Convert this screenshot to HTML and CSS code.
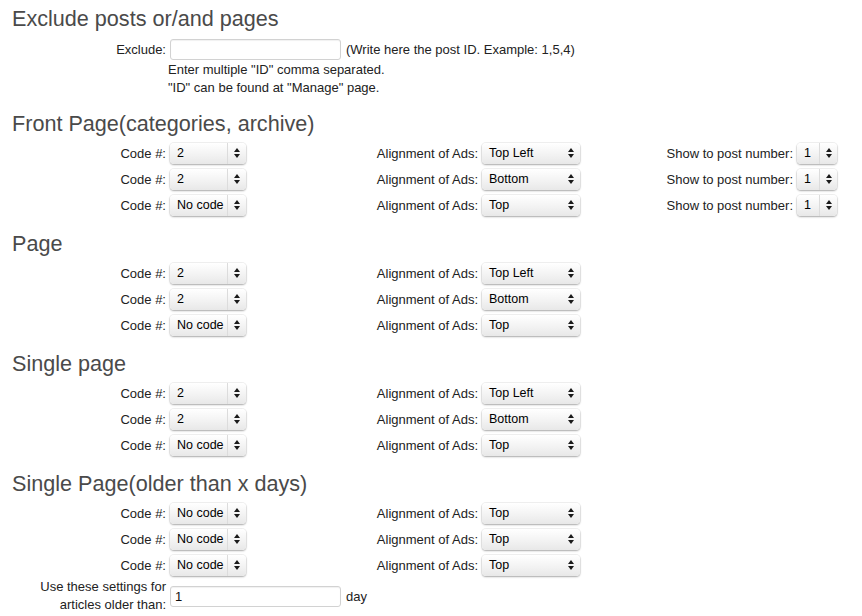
FILE: index.html
```html
<!DOCTYPE html>
<html lang="en">
<head>
    <meta charset="UTF-8">
    <title>Ads settings</title>
    <link rel="stylesheet" href="styles.css">
</head>
<body>
    <section class="block">
        <h2>Exclude posts or/and pages</h2>
        <div class="exclude-row">
            <label class="lbl lbl-first">Exclude:</label>
            <input type="text" class="text-input">
            <span class="note">(Write here the post ID. Example: 1,5,4)</span>
        </div>
        <div class="help">
            Enter multiple "ID" comma separated.<br>
            "ID" can be found at "Manage" page.
        </div>
    </section>

    <section class="block">
        <h2>Front Page(categories, archive)</h2>
        <div class="grid">
            <span class="lbl">Code #:</span>
            <div class="select sel-code"><span class="val">2</span><span class="arrows split"></span></div>
            <span class="lbl">Alignment of Ads:</span>
            <div class="select sel-align"><span class="val">Top Left</span><span class="arrows"></span></div>
            <span class="lbl">Show to post number:</span>
            <div class="select sel-num"><span class="val">1</span><span class="arrows split"></span></div>

            <span class="lbl">Code #:</span>
            <div class="select sel-code"><span class="val">2</span><span class="arrows split"></span></div>
            <span class="lbl">Alignment of Ads:</span>
            <div class="select sel-align"><span class="val">Bottom</span><span class="arrows"></span></div>
            <span class="lbl">Show to post number:</span>
            <div class="select sel-num"><span class="val">1</span><span class="arrows split"></span></div>

            <span class="lbl">Code #:</span>
            <div class="select sel-code"><span class="val">No code</span><span class="arrows split"></span></div>
            <span class="lbl">Alignment of Ads:</span>
            <div class="select sel-align"><span class="val">Top</span><span class="arrows"></span></div>
            <span class="lbl">Show to post number:</span>
            <div class="select sel-num"><span class="val">1</span><span class="arrows split"></span></div>
        </div>
    </section>

    <section class="block">
        <h2>Page</h2>
        <div class="grid">
            <span class="lbl">Code #:</span>
            <div class="select sel-code"><span class="val">2</span><span class="arrows split"></span></div>
            <span class="lbl">Alignment of Ads:</span>
            <div class="select sel-align"><span class="val">Top Left</span><span class="arrows"></span></div>
            <span></span><span></span>

            <span class="lbl">Code #:</span>
            <div class="select sel-code"><span class="val">2</span><span class="arrows split"></span></div>
            <span class="lbl">Alignment of Ads:</span>
            <div class="select sel-align"><span class="val">Bottom</span><span class="arrows"></span></div>
            <span></span><span></span>

            <span class="lbl">Code #:</span>
            <div class="select sel-code"><span class="val">No code</span><span class="arrows split"></span></div>
            <span class="lbl">Alignment of Ads:</span>
            <div class="select sel-align"><span class="val">Top</span><span class="arrows"></span></div>
            <span></span><span></span>
        </div>
    </section>

    <section class="block">
        <h2>Single page</h2>
        <div class="grid">
            <span class="lbl">Code #:</span>
            <div class="select sel-code"><span class="val">2</span><span class="arrows split"></span></div>
            <span class="lbl">Alignment of Ads:</span>
            <div class="select sel-align"><span class="val">Top Left</span><span class="arrows"></span></div>
            <span></span><span></span>

            <span class="lbl">Code #:</span>
            <div class="select sel-code"><span class="val">2</span><span class="arrows split"></span></div>
            <span class="lbl">Alignment of Ads:</span>
            <div class="select sel-align"><span class="val">Bottom</span><span class="arrows"></span></div>
            <span></span><span></span>

            <span class="lbl">Code #:</span>
            <div class="select sel-code"><span class="val">No code</span><span class="arrows split"></span></div>
            <span class="lbl">Alignment of Ads:</span>
            <div class="select sel-align"><span class="val">Top</span><span class="arrows"></span></div>
            <span></span><span></span>
        </div>
    </section>

    <section class="block">
        <h2>Single Page(older than x days)</h2>
        <div class="grid">
            <span class="lbl">Code #:</span>
            <div class="select sel-code"><span class="val">No code</span><span class="arrows split"></span></div>
            <span class="lbl">Alignment of Ads:</span>
            <div class="select sel-align"><span class="val">Top</span><span class="arrows"></span></div>
            <span></span><span></span>

            <span class="lbl">Code #:</span>
            <div class="select sel-code"><span class="val">No code</span><span class="arrows split"></span></div>
            <span class="lbl">Alignment of Ads:</span>
            <div class="select sel-align"><span class="val">Top</span><span class="arrows"></span></div>
            <span></span><span></span>

            <span class="lbl">Code #:</span>
            <div class="select sel-code"><span class="val">No code</span><span class="arrows split"></span></div>
            <span class="lbl">Alignment of Ads:</span>
            <div class="select sel-align"><span class="val">Top</span><span class="arrows"></span></div>
            <span></span><span></span>

            <span class="lbl lbl-tall">Use these settings for articles older than:</span>
            <div class="days">
                <input type="text" class="text-input" value="1">
                <span class="note">day</span>
            </div>
        </div>
    </section>
</body>
</html>
```

FILE: styles.css
```css
body {
    margin: 0;
    padding-top: 6px;
    font-family: "Liberation Sans", Arial, sans-serif;
    font-size: 13px;
    color: #222;
    background: #fff;
}
h2 {
    margin: 0 0 3px 12px;
    font-size: 21.6px;
    line-height: 26px;
    font-weight: normal;
    color: #4a4a4a;
}
.block {
    margin-top: 13px;
}
.block:first-child {
    margin-top: 0;
}
.block:nth-child(2) {
    margin-top: 14px;
}
.lbl {
    text-align: right;
    padding-right: 4px;
}
.exclude-row {
    display: flex;
    align-items: center;
    height: 24px;
    margin-top: 5px;
}
.lbl-first {
    width: 170px;
    box-sizing: border-box;
}
.text-input {
    width: 171px;
    height: 21px;
    box-sizing: border-box;
    margin: 0;
    padding: 2px 4px;
    border: 1px solid #d2d2d2;
    border-radius: 3px;
    box-shadow: inset 0 1px 1px rgba(0, 0, 0, 0.06);
    font-family: inherit;
    font-size: 13px;
    color: #111;
}
.note {
    margin-left: 5px;
}
.help {
    margin-left: 168px;
    line-height: 18px;
}
.grid {
    display: grid;
    grid-template-columns: 170px 76px 236px 98px 217px 40px;
    grid-auto-rows: minmax(26px, auto);
    align-items: center;
}
.select {
    display: flex;
    height: 21px;
    box-sizing: border-box;
    border-radius: 4px;
    background: linear-gradient(#ffffff, #f4f4f4 50%, #e8e8e8);
    box-shadow: 0 1px 2px rgba(0, 0, 0, 0.3), 0 0 0 1px rgba(0, 0, 0, 0.05);
    font-size: 12.5px;
    line-height: 21px;
    color: #000;
}
.select .val {
    flex: 1;
    padding-left: 7px;
    white-space: nowrap;
    overflow: hidden;
}
.arrows {
    width: 18px;
    position: relative;
}
.arrows.split {
    border-left: 1px solid #dcdcdc;
}
.sel-num .arrows {
    width: 17px;
}
.arrows::before,
.arrows::after {
    content: "";
    position: absolute;
    left: 50%;
    margin-left: -3px;
    border-left: 3px solid transparent;
    border-right: 3px solid transparent;
}
.arrows::before {
    top: 5px;
    border-bottom: 4px solid #1a1a1a;
}
.arrows::after {
    top: 11px;
    border-top: 4px solid #1a1a1a;
}
.lbl-tall {
    line-height: 18px;
    padding-left: 30px;
}
.days {
    grid-column: 2 / 5;
    display: flex;
    align-items: center;
}
```
